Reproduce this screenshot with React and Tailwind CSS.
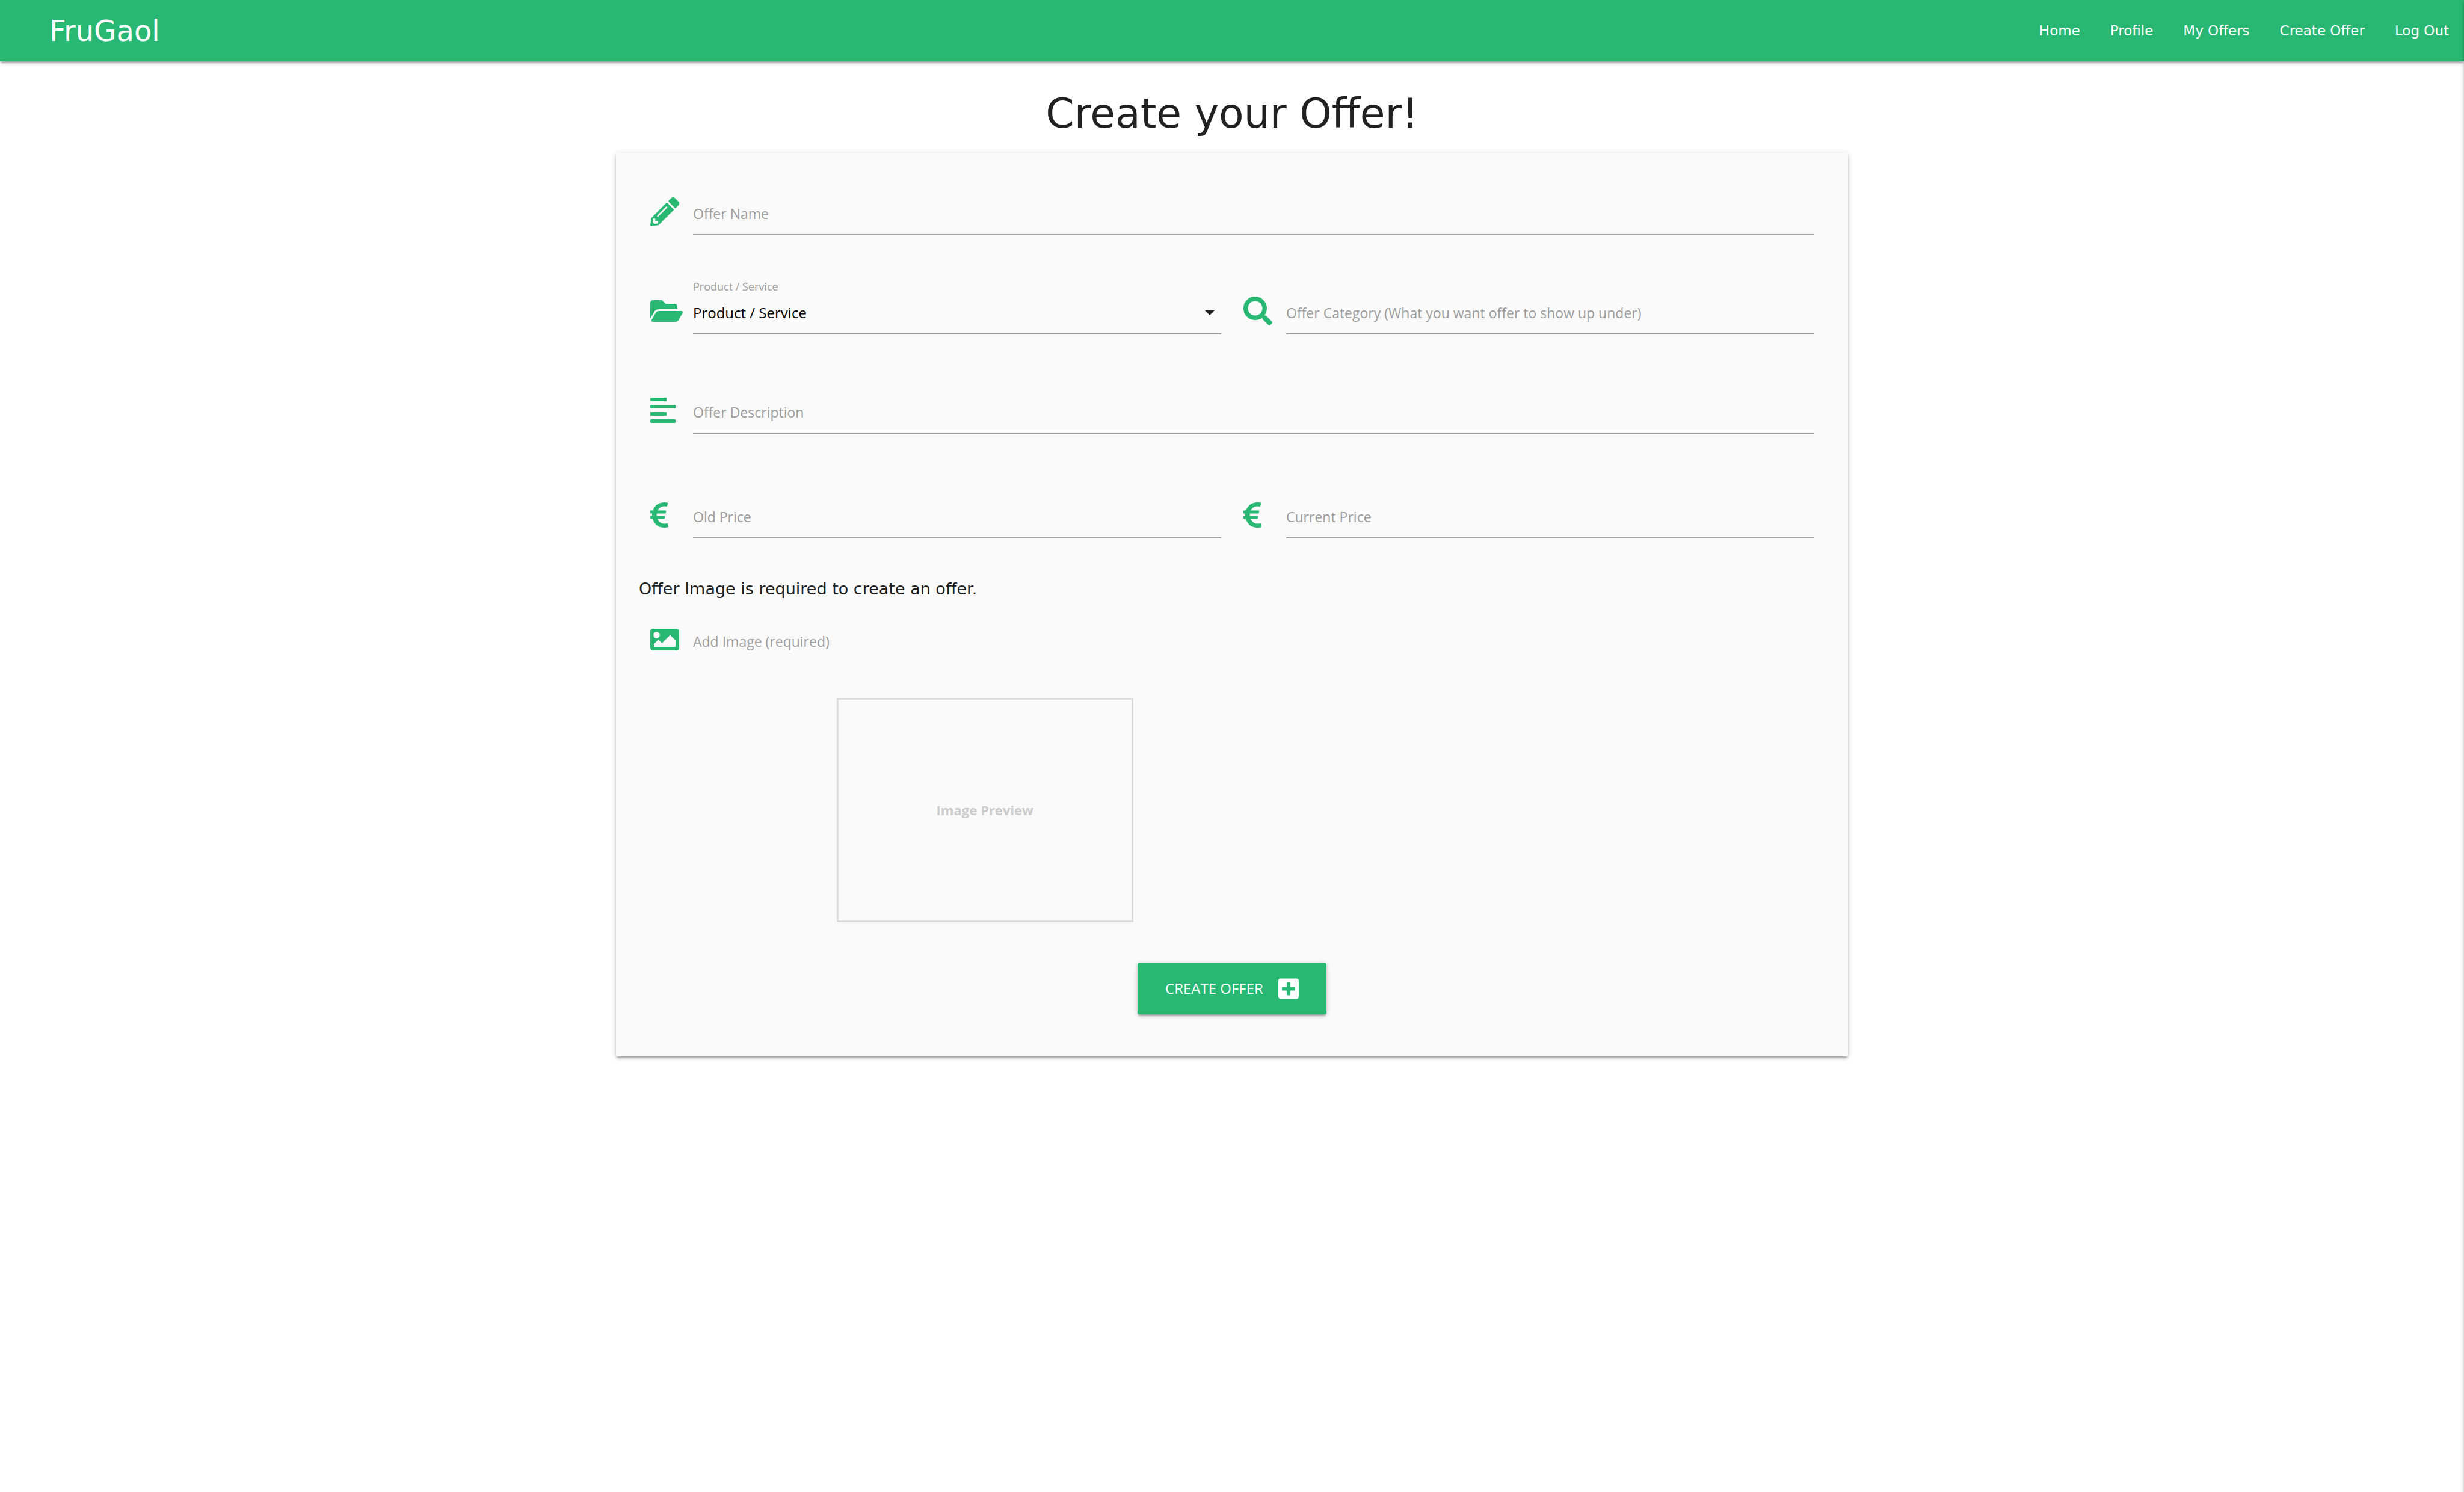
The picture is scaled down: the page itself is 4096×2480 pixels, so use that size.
import {
  FaPencilAlt,
  FaFolderOpen,
  FaSearch,
  FaAlignLeft,
  FaEuroSign,
  FaImage,
  FaPlusSquare,
} from "react-icons/fa";

const LINKS = ["Home", "Profile", "My Offers", "Create Offer", "Log Out"];

const RAISED =
  "shadow-[0_3px_3px_0_rgba(0,0,0,0.14),0_5px_2px_-3px_rgba(0,0,0,0.12),0_2px_8px_0_rgba(0,0,0,0.2)]";

const CONTROL =
  "h-[70px] w-full rounded-none border-b-2 border-[#9e9e9e] bg-transparent outline-none";

function Navbar() {
  return (
    <nav
      className={`relative flex h-[102px] items-center justify-between bg-[#29b873] pl-[82px] font-['DejaVu_Sans',sans-serif] text-white ${RAISED}`}
    >
      <a href="#home" className="text-[48px] leading-none">
        FruGaol
      </a>
      <ul className="flex h-full">
        {LINKS.map((link) => (
          <li key={link}>
            <a href={`#${link}`} className="flex h-full items-center px-[25px] text-[23px]">
              {link}
            </a>
          </li>
        ))}
      </ul>
    </nav>
  );
}

function Field({ icon, children }) {
  return (
    <div className="flex">
      <div className="flex h-[62px] w-[71px] shrink-0 items-center text-[#29b873]">{icon}</div>
      <div className="min-w-0 flex-1">{children}</div>
    </div>
  );
}

function TextField({ icon, label }) {
  return (
    <Field icon={icon}>
      <input
        type="text"
        aria-label={label}
        placeholder={label}
        className={`${CONTROL} text-[23px] text-black placeholder:text-[#9e9e9e] placeholder:opacity-100`}
      />
    </Field>
  );
}

function SelectField() {
  return (
    <div>
      <label htmlFor="kind" className="ml-[71px] block text-[18px] leading-5 text-[#9e9e9e]">
        Product / Service
      </label>
      <Field icon={<FaFolderOpen className="h-12 w-[54px]" />}>
        <div className="relative">
          <select id="kind" className={`${CONTROL} appearance-none text-[24px] text-black`}>
            <option>Product / Service</option>
            <option>Product</option>
            <option>Service</option>
          </select>
          <svg
            viewBox="0 0 16 8"
            className="pointer-events-none absolute top-[30px] right-[11px] h-2 w-4 fill-[#212121]"
          >
            <path d="M0 0h16L8 8z" />
          </svg>
        </div>
      </Field>
    </div>
  );
}

function OfferForm() {
  return (
    <form
      className={`mx-auto w-1/2 rounded-[3px] bg-[#fafafa] px-[38px] pt-[67px] pb-[70px] ${RAISED}`}
    >
      <div className="pr-[18px] pl-[19px]">
        <TextField icon={<FaPencilAlt className="size-12" />} label="Offer Name" />
        <div className="mt-[75px] grid grid-cols-2 items-end gap-x-[37px]">
          <SelectField />
          <TextField
            icon={<FaSearch className="size-12" />}
            label="Offer Category (What you want offer to show up under)"
          />
        </div>
        <div className="mt-[95px]">
          <TextField icon={<FaAlignLeft className="h-12 w-[42px]" />} label="Offer Description" />
        </div>
        <div className="mt-[104px] grid grid-cols-2 gap-x-[37px]">
          <TextField icon={<FaEuroSign className="h-12 w-[30px]" />} label="Old Price" />
          <TextField icon={<FaEuroSign className="h-12 w-[30px]" />} label="Current Price" />
        </div>
      </div>

      <p className="mt-16 font-['DejaVu_Sans',sans-serif] text-[27px] leading-10 text-[#212121]">
        Offer Image is required to create an offer.
      </p>

      <label className="mt-[33px] flex cursor-pointer px-[19px] text-[23px] text-[#9e9e9e]">
        <span className="flex h-[62px] w-[71px] items-center text-[#29b873]">
          <FaImage className="size-12" />
        </span>
        <span className="leading-[68px]">Add Image (required)</span>
        <input type="file" accept="image/*" className="sr-only" />
      </label>

      <div className="mt-[60px] ml-[16.6667%] flex h-[373px] w-1/4 items-center justify-center border-3 border-[#dddddd] text-[22px] font-bold text-[#cccccc]">
        Image Preview
      </div>

      <button
        type="button"
        className={`mx-auto mt-[67px] flex h-[86px] items-center gap-[25px] rounded-[3px] bg-[#29b873] px-[46px] text-[24px] text-white uppercase ${RAISED}`}
      >
        Create Offer
        <FaPlusSquare className="h-[39px] w-[34px]" />
      </button>
    </form>
  );
}

export default function App() {
  return (
    <div className="min-h-screen bg-white font-['Open_Sans',sans-serif]">
      <Navbar />
      <main>
        <h1 className="mt-[47px] mb-[25px] text-center font-['DejaVu_Sans',sans-serif] text-[68px] leading-[80px] text-[#212121]">
          Create your Offer!
        </h1>
        <OfferForm />
      </main>
      {/* Closed side menu, parked just past the window's right edge */}
      <aside className={`fixed inset-y-0 left-full w-[480px] bg-white ${RAISED}`} />
    </div>
  );
}
